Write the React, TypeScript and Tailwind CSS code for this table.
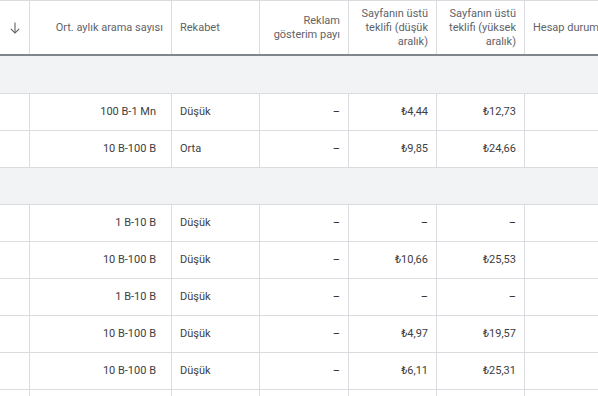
import React from 'react';

type Row = [string, string, string, string, string];

const groups: Row[][] = [
  [
    ['100 B-1 Mn', 'Düşük', '–', '₺4,44', '₺12,73'],
    ['10 B-100 B', 'Orta', '–', '₺9,85', '₺24,66'],
  ],
  [
    ['1 B-10 B', 'Düşük', '–', '–', '–'],
    ['10 B-100 B', 'Düşük', '–', '₺10,66', '₺25,53'],
    ['1 B-10 B', 'Düşük', '–', '–', '–'],
    ['10 B-100 B', 'Düşük', '–', '₺4,97', '₺19,57'],
    ['10 B-100 B', 'Düşük', '–', '₺6,11', '₺25,31'],
    // next row only peeks in at the bottom edge
    ['', '', '', '', ''],
  ],
];

const cell = 'flex items-center border-r border-[#dadce0] shrink-0';

const SortArrow = () => (
  <svg width="12" height="12" viewBox="0 0 12 12" fill="none" stroke="#5f6368" strokeWidth="1.1">
    <path d="M6 0.5v10.5" />
    <path d="M1.8 6.8L6 11l4.2-4.2" />
  </svg>
);

const DataRow: React.FC<{ row: Row }> = ({ row }) => (
  <div className="flex h-[37px] border-b border-[#dadce0] bg-white text-[11px] leading-[14px] text-[#3c4043]">
    <div className={`${cell} w-[30px]`} />
    <div className={`${cell} w-[142px] justify-end pr-[15px]`}>{row[0]}</div>
    <div className={`${cell} w-[88px] pl-[8px]`}>{row[1]}</div>
    <div className={`${cell} w-[89px] justify-end pr-[8px] text-[#202124]`}>{row[2]}</div>
    <div className={`${cell} w-[88px] justify-end pr-[8px] ${row[3] === '–' ? 'text-[#202124]' : ''}`}>{row[3]}</div>
    <div className={`${cell} w-[88px] justify-end pr-[8px] ${row[4] === '–' ? 'text-[#202124]' : ''}`}>{row[4]}</div>
    <div className={`${cell} w-[160px]`} />
  </div>
);

export default function App() {
  return (
    <div className="w-[598px] h-[396px] overflow-hidden bg-white font-['Roboto',_'Liberation_Sans',_sans-serif]">
      <div className="w-[700px]">
        {/* header */}
        <div className="flex h-[56px] border-t border-[#dadce0] border-b-2 border-b-[#80868b] text-[11px] leading-[14px] text-[#5f6368]">
          <div className={`${cell} w-[30px] justify-center pl-[1px]`}>
            <SortArrow />
          </div>
          <div className={`${cell} w-[142px] justify-end pr-[8px]`}>Ort. aylık arama sayısı</div>
          <div className={`${cell} w-[88px] pl-[8px]`}>Rekabet</div>
          <div className={`${cell} w-[89px] justify-end pr-[8px] text-right`}>
            Reklam
            <br />
            gösterim payı
          </div>
          <div className={`${cell} w-[88px] justify-end pr-[8px] text-right`}>
            Sayfanın üstü
            <br />
            teklifi (düşük
            <br />
            aralık)
          </div>
          <div className={`${cell} w-[88px] justify-end pr-[8px] text-right`}>
            Sayfanın üstü
            <br />
            teklifi (yüksek
            <br />
            aralık)
          </div>
          <div className={`${cell} w-[160px] pl-[8px]`}>Hesap durumu</div>
        </div>

        {groups.map((rows, gi) => (
          <React.Fragment key={gi}>
            <div
              className={`border-b border-[#dadce0] bg-[#f1f3f4] ${gi === 0 ? 'h-[38px]' : 'h-[37px]'}`}
            />
            {rows.map((row, ri) => (
              <DataRow key={ri} row={row} />
            ))}
          </React.Fragment>
        ))}
      </div>
    </div>
  );
}
